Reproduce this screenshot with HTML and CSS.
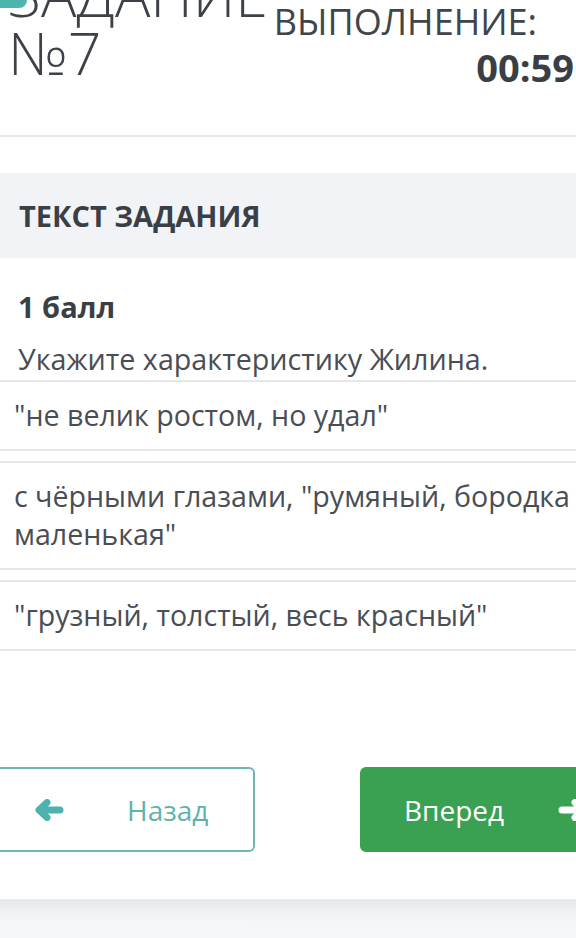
FILE: index.html
```html
<!DOCTYPE html>
<html lang="ru">
<head>
<meta charset="utf-8">
<title>Задание №7</title>
<link rel="stylesheet" href="styles.css">
</head>
<body>
<div class="page">
  <div class="tab-marker"></div>
  <header class="header">
    <h1 class="title">ЗАДАНИЕ<br>№7</h1>
    <div class="timer">
      <div class="timer-label">ВЫПОЛНЕНИЕ:</div>
      <div class="timer-value">00:59</div>
    </div>
  </header>

  <section class="task">
    <div class="task-head">ТЕКСТ ЗАДАНИЯ</div>
    <div class="question">
      <div class="points">1 балл</div>
      <div class="question-text">Укажите характеристику Жилина.</div>
    </div>
    <div class="options">
      <div class="option">"не велик ростом, но удал"</div>
      <div class="option">с чёрными глазами, "румяный, бородка маленькая"</div>
      <div class="option">"грузный, толстый, весь красный"</div>
    </div>
  </section>

  <nav class="nav">
    <button class="btn btn-back" type="button">
      <svg class="ico" viewBox="0 0 30 22" width="30" height="22" aria-hidden="true"><path d="M26 11H6M13 3.5L5 11l8 7.5"/></svg>
      <span>Назад</span>
    </button>
    <button class="btn btn-next" type="button">
      <span>Вперед</span>
      <svg class="ico" viewBox="0 0 30 22" width="30" height="22" aria-hidden="true"><path d="M4 11h20M17 3.5l8 7.5-8 7.5"/></svg>
    </button>
  </nav>

  <footer class="footer"></footer>
</div>
</body>
</html>
```

FILE: styles.css
```css
html, body {
  margin: 0;
  padding: 0;
  background: #ffffff;
}

body {
  font-family: "Open Sans", "Noto Sans", sans-serif;
  color: #45494f;
  overflow: hidden;
}

.page {
  position: relative;
  width: 576px;
  height: 938px;
  overflow: hidden;
}

.tab-marker {
  position: absolute;
  left: 0;
  top: 0;
  width: 27px;
  height: 8px;
  background: #4db5ad;
  border-bottom-right-radius: 8px;
  z-index: 2;
}

.header {
  display: flex;
  justify-content: space-between;
  align-items: flex-start;
  margin-top: -35px;
  padding: 0 2px 45px 8px;
  border-bottom: 2px solid #e7e8ea;
}

.title {
  margin: 0;
  font-size: 59px;
  line-height: 58px;
  font-weight: 300;
  color: #3d4248;
  white-space: nowrap;
}

.timer {
  display: flex;
  flex-direction: column;
  align-items: flex-end;
  margin-top: 37px;
}

.timer-label {
  font-size: 36px;
  line-height: 40px;
  font-weight: 400;
  color: #40454b;
  margin-right: 37px;
  white-space: nowrap;
}

.timer-value {
  font-size: 38px;
  line-height: 46px;
  font-weight: 700;
  color: #3a3f46;
  margin-top: 2px;
}

.task {
  margin-top: 36px;
}

.task-head {
  background: #f2f3f6;
  padding: 23px 19px 22px;
  font-size: 29px;
  line-height: 40px;
  font-weight: 700;
  color: #3a3f46;
}

.question {
  padding: 30px 18px 2px;
  border-bottom: 2px solid #e5e7e9;
}

.points {
  font-size: 29px;
  line-height: 38px;
  font-weight: 700;
  color: #3a3f46;
}

.question-text {
  margin-top: 14px;
  font-size: 28.7px;
  line-height: 38px;
  color: #4a4e54;
}

.options {
  display: flex;
  flex-direction: column;
  gap: 10px;
  margin-right: -60px;
}

.option {
  padding: 14px 14px 15px;
  border-bottom: 2px solid #e5e7e9;
  font-size: 28.6px;
  line-height: 38px;
  color: #4a4e54;
}

.option + .option {
  border-top: 2px solid #e5e7e9;
}

.nav {
  display: flex;
  gap: 105px;
  margin: 116px 0 0 -45px;
}

.btn {
  display: flex;
  align-items: center;
  height: 85px;
  box-sizing: border-box;
  border-radius: 6px;
  font-family: "Open Sans", "Noto Sans", sans-serif;
  font-size: 28px;
  flex: 0 0 auto;
}

.ico {
  fill: none;
  stroke-width: 7;
  stroke-linecap: round;
  stroke-linejoin: round;
  flex: 0 0 auto;
}

.btn-back {
  width: 300px;
  padding: 0 0 0 77px;
  background: #ffffff;
  border: 2px solid #6db6b3;
  color: #5fb2ad;
  gap: 63px;
}

.btn-back .ico {
  stroke: #4fb3ad;
}

.btn-next {
  width: 300px;
  padding: 0 0 0 42px;
  background: #3aa153;
  border: 2px solid #3aa153;
  color: #ffffff;
  gap: 54px;
}

.btn-next .ico {
  stroke: #ffffff;
}

.footer {
  margin-top: 47px;
  height: 60px;
  border-top: 1px solid #e9eaeb;
  background: linear-gradient(to bottom, #e6e8eb 0px, #eef1f4 10px, #f4f7fa 22px, #f5f8fb 100%);
}
```
